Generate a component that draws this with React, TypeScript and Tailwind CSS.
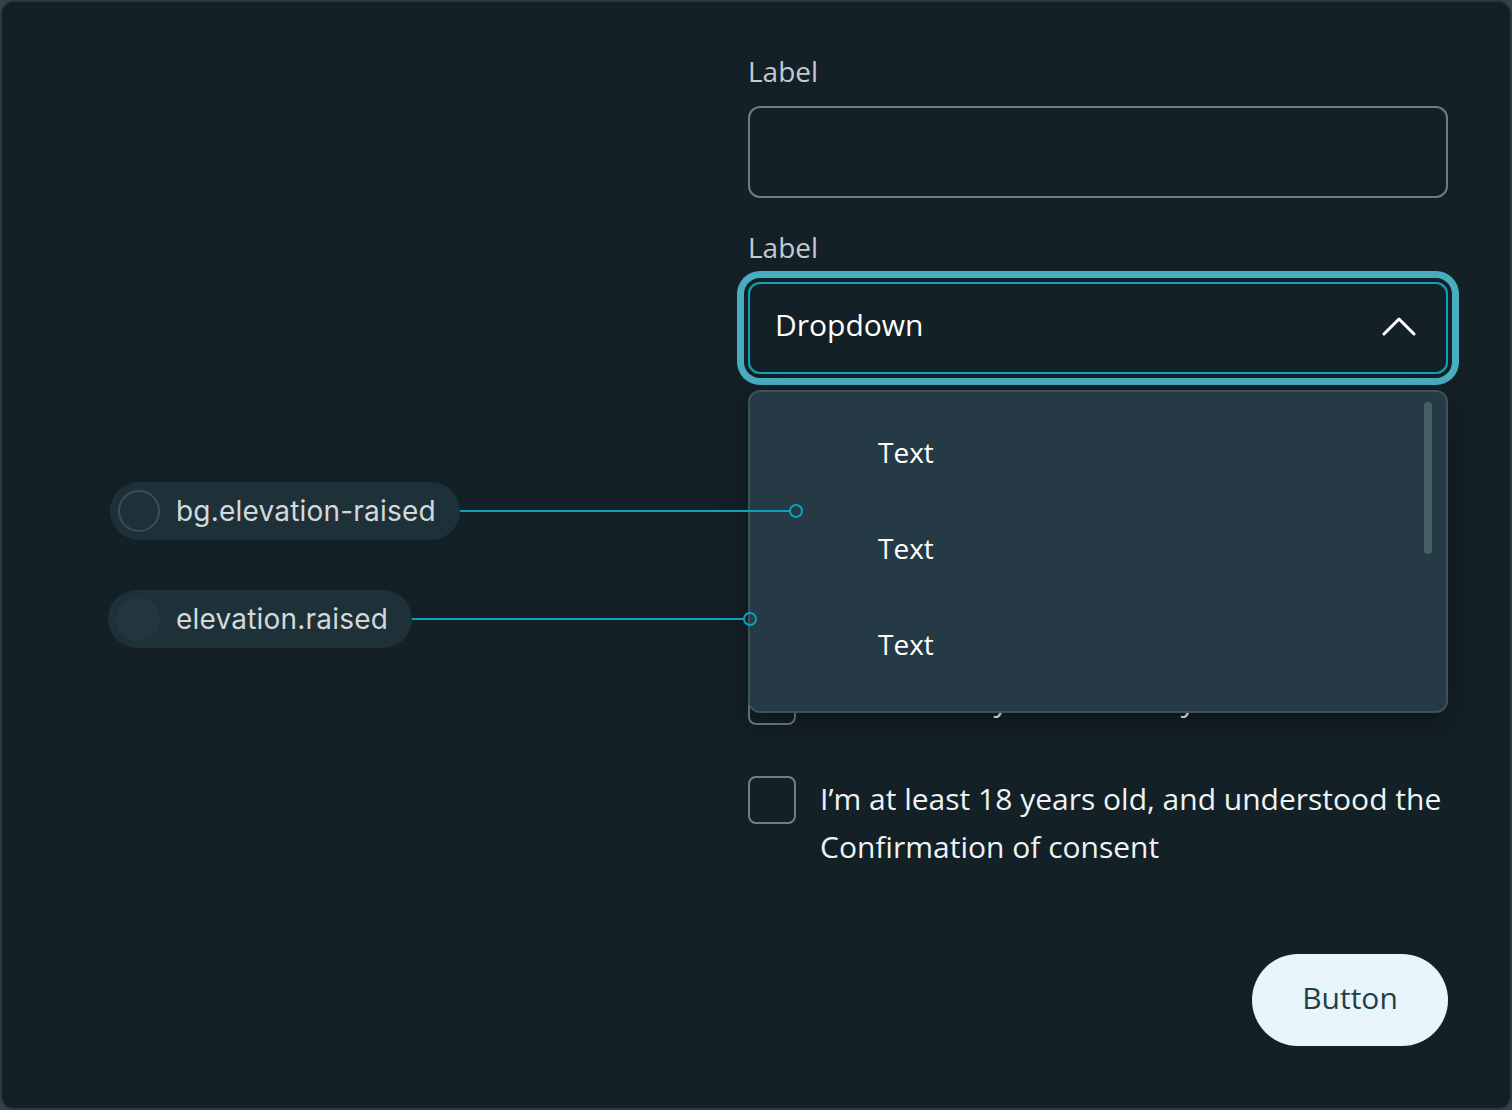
import { useState } from "react";

const items = ["Text", "Text", "Text"];

const Field = ({ label, children }: { label: string; children: React.ReactNode }) => (
  <div className="flex flex-col gap-[18px]">
    <p className="-mt-[2px] mb-[2px] text-[28px] leading-[30px] text-[#c3cbce]">{label}</p>
    {children}
  </div>
);

const Checkbox = ({ children }: { children: React.ReactNode }) => (
  <label className="flex items-start gap-6">
    <span className="h-12 w-12 shrink-0 rounded-lg border-2 border-[#6f7f86]" />
    <span className="-mt-[1px] text-[30px] leading-[48px] text-[#eef3f5]">{children}</span>
  </label>
);

const Chip = ({
  label,
  outlined,
  className,
}: {
  label: string;
  outlined?: boolean;
  className: string;
}) => (
  <div
    className={`absolute flex h-[58px] items-center gap-4 rounded-full bg-[#1e3139] pl-2 pr-6 ${className}`}
  >
    {outlined ? (
      <span className="h-[42px] w-[42px] rounded-full border-2 border-[#3a4f57]" />
    ) : (
      <span className="h-[44px] w-[44px] rounded-full bg-[#22363e]" />
    )}
    <span
      className="text-[28px] leading-none tracking-[0.2px] text-[#d3d9db]"
      style={{ fontFamily: "Inter, 'Liberation Sans', sans-serif" }}
    >
      {label}
    </span>
  </div>
);

export default function App() {
  const [open] = useState(true);

  return (
    <div className="bg-[#35444a]">
      <div
        className="relative h-[1110px] w-[1512px] overflow-hidden rounded-[14px] border-2 border-[#2a393f] bg-[#132026]"
        style={{ fontFamily: "'Open Sans', Lato, sans-serif" }}
      >
        <div className="ml-[746px] flex w-[700px] flex-col pt-[56px]">
          <Field label="Label">
            <div className="h-[92px] rounded-xl border-2 border-[#6d7c83]" />
          </Field>

          <div className="mt-9">
            <Field label="Label">
              <div className="relative">
                <button className="flex h-[92px] w-full items-center justify-between rounded-xl border-2 border-[#0aa3bb] pl-[25px] pr-[30px] ring-[7px] ring-[#48adc0] ring-offset-4 ring-offset-[#132026]">
                  <span className="-mt-[7px] text-[30px] text-white">Dropdown</span>
                  <svg width="34" height="20" viewBox="0 0 34 20" fill="none" className="-mt-[4px]">
                    <path
                      d="M2 18 17 3l15 15"
                      stroke="#fff"
                      strokeWidth="3"
                      strokeLinecap="round"
                      strokeLinejoin="round"
                    />
                  </svg>
                </button>

                {open && (
                  <div className="absolute left-0 right-0 top-[108px] z-10 h-[323px] rounded-xl border-2 border-[#3b525c] bg-[#253a44] pt-[12px] shadow-[0_10px_28px_rgba(0,0,0,0.3)]">
                    {items.map((t, i) => (
                      <div
                        key={i}
                        className="flex h-24 items-center pl-[128px] text-[28px] text-white"
                      >
                        {t}
                      </div>
                    ))}
                    <div className="absolute right-[14px] top-[10px] h-[152px] w-2 rounded-full bg-[#475d66]" />
                  </div>
                )}
              </div>
            </Field>
          </div>

          <div className="mt-[303px] flex flex-col gap-[51px]">
            <Checkbox>Inform me by email weekly</Checkbox>
            <Checkbox>
              I’m at least 18 years old, and understood the Confirmation of consent
            </Checkbox>
          </div>

          <div className="mt-[83px] flex justify-end">
            <button className="h-[92px] w-[196px] rounded-full bg-[#e8f6fb] pb-[5px] text-[30px] text-[#1d3f4b]">
              Button
            </button>
          </div>
        </div>

        {/* annotations */}
        <svg
          className="pointer-events-none absolute left-0 top-0 z-20"
          width="1508"
          height="1106"
          fill="none"
        >
          <path d="M458 509H788" stroke="#0aa2bb" strokeWidth="2" />
          <circle cx="794" cy="509" r="6" stroke="#0aa2bb" strokeWidth="2" />
          <path d="M410 617H742" stroke="#0aa2bb" strokeWidth="2" />
          <circle cx="748" cy="617" r="6" stroke="#0aa2bb" strokeWidth="2" />
        </svg>
        <Chip label="bg.elevation-raised" outlined className="left-[108px] top-[480px] z-20" />
        <Chip label="elevation.raised" className="left-[106px] top-[588px] z-20" />
      </div>
    </div>
  );
}
